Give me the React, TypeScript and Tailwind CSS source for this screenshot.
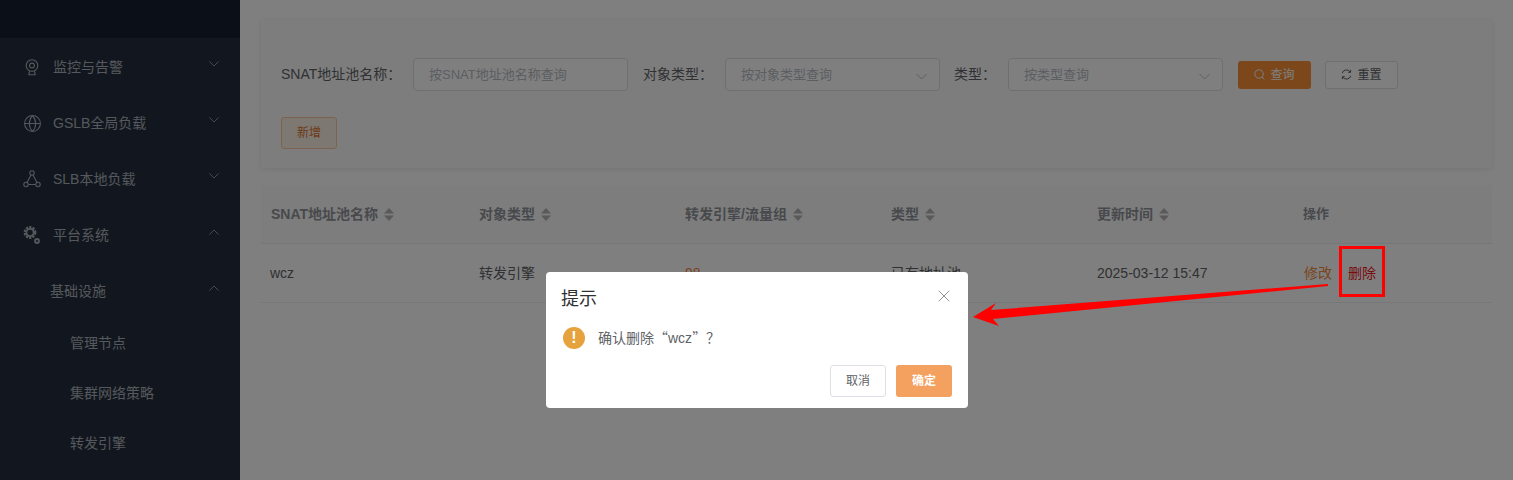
import React from "react";
import { Globe, X } from "lucide-react";

const FONT = "font-['Liberation_Sans','Noto_Sans_CJK_SC',sans-serif]";
const CJK = "font-['Noto_Sans_CJK_SC',sans-serif]";

const Chevron = ({ up = false, className = "" }: { up?: boolean; className?: string }) => (
  <svg width="10" height="6" viewBox="0 0 10 6" fill="none" stroke="currentColor" strokeWidth="1" className={className}>
    <path d={up ? "M0.5 5.5L5 1L9.5 5.5" : "M0.5 0.5L5 5L9.5 0.5"} />
  </svg>
);

const CameraIcon = () => (
  <svg width="14" height="17" viewBox="0 0 14 17" fill="none" stroke="currentColor" strokeWidth="1.1" className="ml-[2px]">
    <circle cx="7" cy="6.5" r="5.8" />
    <circle cx="7" cy="6.5" r="2.4" />
    <path d="M4.5 12.2L3.8 15.8H10.2L9.5 12.2" />
  </svg>
);

const NodesIcon = () => (
  <svg width="18" height="18" viewBox="0 0 18 18" fill="none" stroke="currentColor" strokeWidth="1.1">
    <circle cx="9" cy="3" r="2.2" />
    <circle cx="3" cy="14.5" r="2.2" />
    <circle cx="15" cy="14.5" r="2.2" />
    <path d="M8 5L4 12.5M10 5L14 12.5M5.2 14.5H12.8" />
  </svg>
);

const GearsIcon = () => (
  <svg width="18" height="19" viewBox="0 0 18 19" fill="none" stroke="currentColor">
    <circle cx="7" cy="6.5" r="5.2" strokeWidth="2.4" strokeDasharray="2.2 1.1" />
    <circle cx="7" cy="6.5" r="3.6" strokeWidth="1.8" />
    <circle cx="14" cy="15" r="2" strokeWidth="1.8" />
  </svg>
);

const SortIcon = () => (
  <svg width="10" height="13" viewBox="0 0 10 13" className="ml-[6px] text-[#b4b4b4]" fill="currentColor">
    <path d="M5 0L10 5.5H0Z" />
    <path d="M5 13L0 7.5H10Z" />
  </svg>
);

const NavItem = ({ icon, label, up = false }: { icon: React.ReactNode; label: string; up?: boolean }) => (
  <div className="flex h-[56px] items-center pl-[23px] pr-[21px] text-[#aab0b8]">
    <span className="flex w-[30px] justify-start pt-[2px]">{icon}</span>
    <span className="flex-1 pt-[2px] text-[14px]">{label}</span>
    <Chevron up={up} className="mb-[4px] text-[#8a9099]" />
  </div>
);

const SubItem = ({ label }: { label: string }) => (
  <div className="flex h-[50px] items-center pl-[70px] pt-[2px] text-[14px] text-[#aab0b8]">{label}</div>
);

const Field = ({ label, labelWidth, placeholder, width, select = false }: { label: string; labelWidth: string; placeholder: string; width: string; select?: boolean }) => (
  <>
    <span className={`${labelWidth} shrink-0 text-[14px] text-[#606266]`}>{label}</span>
    <div className={`${width} flex h-[33px] shrink-0 items-center justify-between rounded-[4px] border border-[#dcdfe6] bg-white pl-[15px] pr-[12px] text-[13px] text-[#b8bcc4]`}>
      <span>{placeholder}</span>
      {select && (
        <svg width="11" height="7" viewBox="0 0 11 7" fill="none" stroke="currentColor" strokeWidth="1" className="mt-[3px]">
          <path d="M0.5 1L5.5 6L10.5 1" />
        </svg>
      )}
    </div>
  </>
);

const columns = ["w-[208px] pl-[10px]", "w-[206px] pl-[10px]", "w-[206px] pl-[10px]", "w-[206px] pl-[10px]", "w-[206px] pl-[10px]", "flex-1 pl-[10px]"];

export default function App() {
  return (
    <div className={`${FONT} relative flex h-[480px] w-[1513px] overflow-hidden bg-white`}>
      <aside className="w-[240px] shrink-0 bg-[#252f3e]">
        <div className="h-[38px] bg-[#161e2e]" />
        <NavItem icon={<CameraIcon />} label="监控与告警" />
        <NavItem icon={<Globe size={19} strokeWidth={1.3} />} label="GSLB全局负载" />
        <NavItem icon={<NodesIcon />} label="SLB本地负载" />
        <NavItem icon={<GearsIcon />} label="平台系统" up />
        <div className="flex h-[56px] items-center pl-[50px] pr-[21px] text-[14px] text-[#aab0b8]">
          <span className="flex-1 pt-[2px]">基础设施</span>
          <Chevron up className="mb-[4px] text-[#8a9099]" />
        </div>
        <div className="-mt-[1px]">
          <SubItem label="管理节点" />
          <SubItem label="集群网络策略" />
          <SubItem label="转发引擎" />
        </div>
      </aside>

      <main className="min-w-0 flex-1 pl-[21px] pr-[21px] pt-[20px]">
        <section className="h-[148px] rounded-[2px] bg-[#fbfbfb] pl-[20px] pt-[38px] shadow-[0_1px_6px_rgba(0,0,0,0.1)]">
          <div className="flex items-center">
            <Field label="SNAT地址池名称：" labelWidth="w-[132px]" placeholder="按SNAT地址池名称查询" width="w-[215px]" />
            <span className="w-[15px]" />
            <Field label="对象类型：" labelWidth="w-[82px]" placeholder="按对象类型查询" width="w-[215px]" select />
            <span className="w-[14px]" />
            <Field label="类型：" labelWidth="w-[54px]" placeholder="按类型查询" width="w-[215px]" select />
            <button className="ml-[15px] flex h-[28px] w-[73px] items-center justify-center gap-[5px] rounded-[3px] bg-[#f98f36] text-[12px] text-white">
              <svg width="11" height="11" viewBox="0 0 11 11" fill="none" stroke="currentColor" strokeWidth="1">
                <circle cx="5" cy="5" r="4.2" />
                <path d="M8 8L10.3 10.3" />
              </svg>
              查询
            </button>
            <button className="ml-[14px] flex h-[28px] w-[73px] items-center justify-center gap-[5px] rounded-[3px] border border-[#dcdfe6] bg-white text-[12px] text-[#606266]">
              <svg width="11" height="11" viewBox="0 0 11 11" fill="none" stroke="currentColor" strokeWidth="1">
                <path d="M1.2 4.2A4.4 4.4 0 0 1 9.2 3M9.8 6.8A4.4 4.4 0 0 1 1.8 8" />
                <path d="M9.6 0.8V3.3H7.2M1.4 10.2V7.7H3.8" />
              </svg>
              重置
            </button>
          </div>
          <button className="mt-[26px] flex h-[32px] w-[56px] items-center justify-center rounded-[3px] border border-[#fbc79a] bg-[#fdf0e4] text-[12px] text-[#d9772f]">
            新增
          </button>
        </section>

        <section className="mt-[17px]">
          <div className="flex h-[59px] items-center border-b border-[#ebeef5] bg-[#fbfbfb] text-[14px] font-bold text-[#909399]">
            {["SNAT地址池名称", "对象类型", "转发引擎/流量组", "类型", "更新时间"].map((title, i) => (
              <div key={title} className={`${columns[i]} flex items-center`}>
                {title}
                <SortIcon />
              </div>
            ))}
            <div className={`${columns[5]} text-[13px]`}>操作</div>
          </div>
          <div className="flex h-[59px] items-center border-b border-[#ebeef5] text-[14px] text-[#606266]">
            <div className="w-[208px] pl-[9px]">wcz</div>
            <div className={columns[1]}>转发引擎</div>
            <div className={`${columns[2]} text-[#f9833a]`}>98</div>
            <div className={columns[3]}>已有地址池</div>
            <div className={columns[4]}>2025-03-12 15:47</div>
            <div className="flex flex-1 gap-[16px] pl-[11px]">
              <span className="text-[#f08a3c]">修改</span>
              <span className="text-[#f01818]">删除</span>
            </div>
          </div>
        </section>
      </main>

      {/* Dialog mask */}
      <div className="absolute inset-0 bg-black/50" />

      <div className="absolute left-[546px] top-[272px] h-[136px] w-[422px] rounded-[4px] bg-white">
        <div className="flex items-start justify-between pl-[15px] pr-[14px] pt-[16px]">
          <span className="text-[18px] leading-[22px] text-[#303133]">提示</span>
          <X size={20} strokeWidth={1.2} className="-mt-[2px] text-[#909399]" />
        </div>
        <div className="mt-[17px] flex items-center pl-[17px] text-[14px] text-[#606266]">
          <span className="flex h-[22px] w-[22px] items-center justify-center rounded-full bg-[#e6a23c] text-[16px] font-bold text-white">!</span>
          <span lang="zh-CN" className="ml-[13px]">
            确认删除<span className={CJK}>“</span>wcz<span className={CJK}>”？</span>
          </span>
        </div>
        <div className="mt-[16px] flex justify-end gap-[10px] pr-[16px]">
          <button className="h-[32px] w-[56px] rounded-[3px] border border-[#dcdfe6] text-[12px] text-[#606266]">取消</button>
          <button className="h-[32px] w-[56px] rounded-[3px] bg-[#f4a05e] text-[12px] font-bold text-white">确定</button>
        </div>
      </div>

      {/* Red annotation drawn on top of the screenshot */}
      <div className="absolute left-[1339px] top-[246px] h-[51px] w-[46px] border-[3px] border-[#ff0000]" />
      <svg className="absolute left-[960px] top-[275px]" width="380" height="60" viewBox="0 0 380 60">
        <polygon points="13,42 36,28 31,35 368,9 368,11 33,44 39,51" fill="#ff0000" />
      </svg>
    </div>
  );
}
